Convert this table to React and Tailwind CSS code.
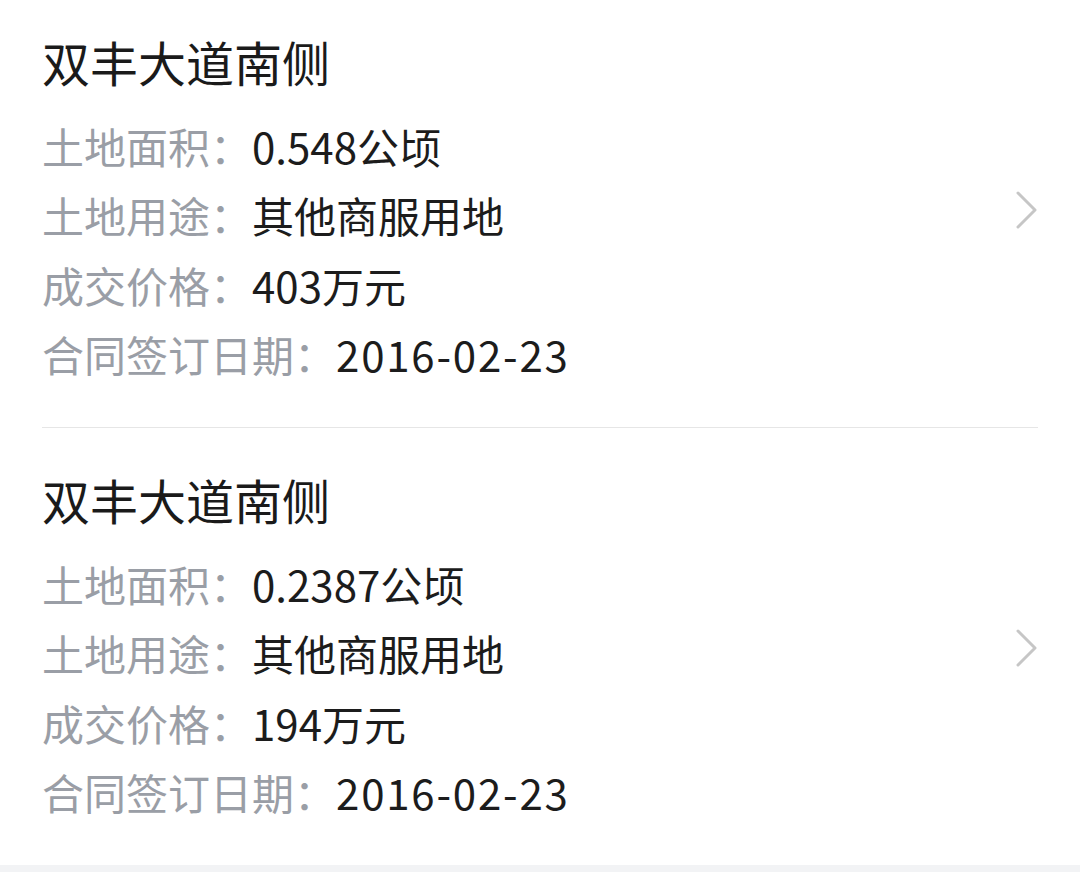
import React from 'react';

const lands = [
  { name: '双丰大道南侧', area: '0.548公顷', usage: '其他商服用地', price: '403万元', date: '2016-02-23' },
  { name: '双丰大道南侧', area: '0.2387公顷', usage: '其他商服用地', price: '194万元', date: '2016-02-23' },
];

const Chevron = () => (
  <svg width="22" height="38" viewBox="0 0 22 38" fill="none" className="shrink-0">
    <path d="M2 2 L19 19 L2 36" stroke="#c6c6c6" strokeWidth="3" strokeLinecap="round" strokeLinejoin="round" />
  </svg>
);

const Row = ({ label, value, wide }) => (
  <div className="flex leading-[69.3px] text-[42px]">
    <span className="text-[#9a9ea6]">{label}：</span>
    <span className={wide ? 'text-[#1c1c1c] tracking-[1.8px]' : 'text-[#1c1c1c]'}>{value}</span>
  </div>
);

const LandCard = ({ land }) => (
  <div className="flex items-center px-[42px] pt-[41px] pb-[39px]">
    <div className="flex-1">
      <h3 className="text-[48px] leading-[60px] text-[#1a1a1a] font-normal">{land.name}</h3>
      <div className="mt-[20px]">
        <Row label="土地面积" value={land.area} />
        <Row label="土地用途" value={land.usage} />
        <Row label="成交价格" value={land.price} />
        <Row label="合同签订日期" value={land.date} wide />
      </div>
    </div>
    <Chevron />
  </div>
);

export default function App() {
  return (
    <div
      className="w-[1080px] h-[872px] overflow-hidden bg-[#f2f3f5]"
      style={{ fontFamily: '"Noto Sans CJK SC", "Noto Sans", sans-serif' }}
    >
      <div className="bg-white -mt-[10px]">
        {lands.map((land, i) => (
          <div key={i}>
            {i > 0 && <div className="mx-[42px] h-px bg-[#e6e6e6]" />}
            <LandCard land={land} />
          </div>
        ))}
      </div>
    </div>
  );
}
